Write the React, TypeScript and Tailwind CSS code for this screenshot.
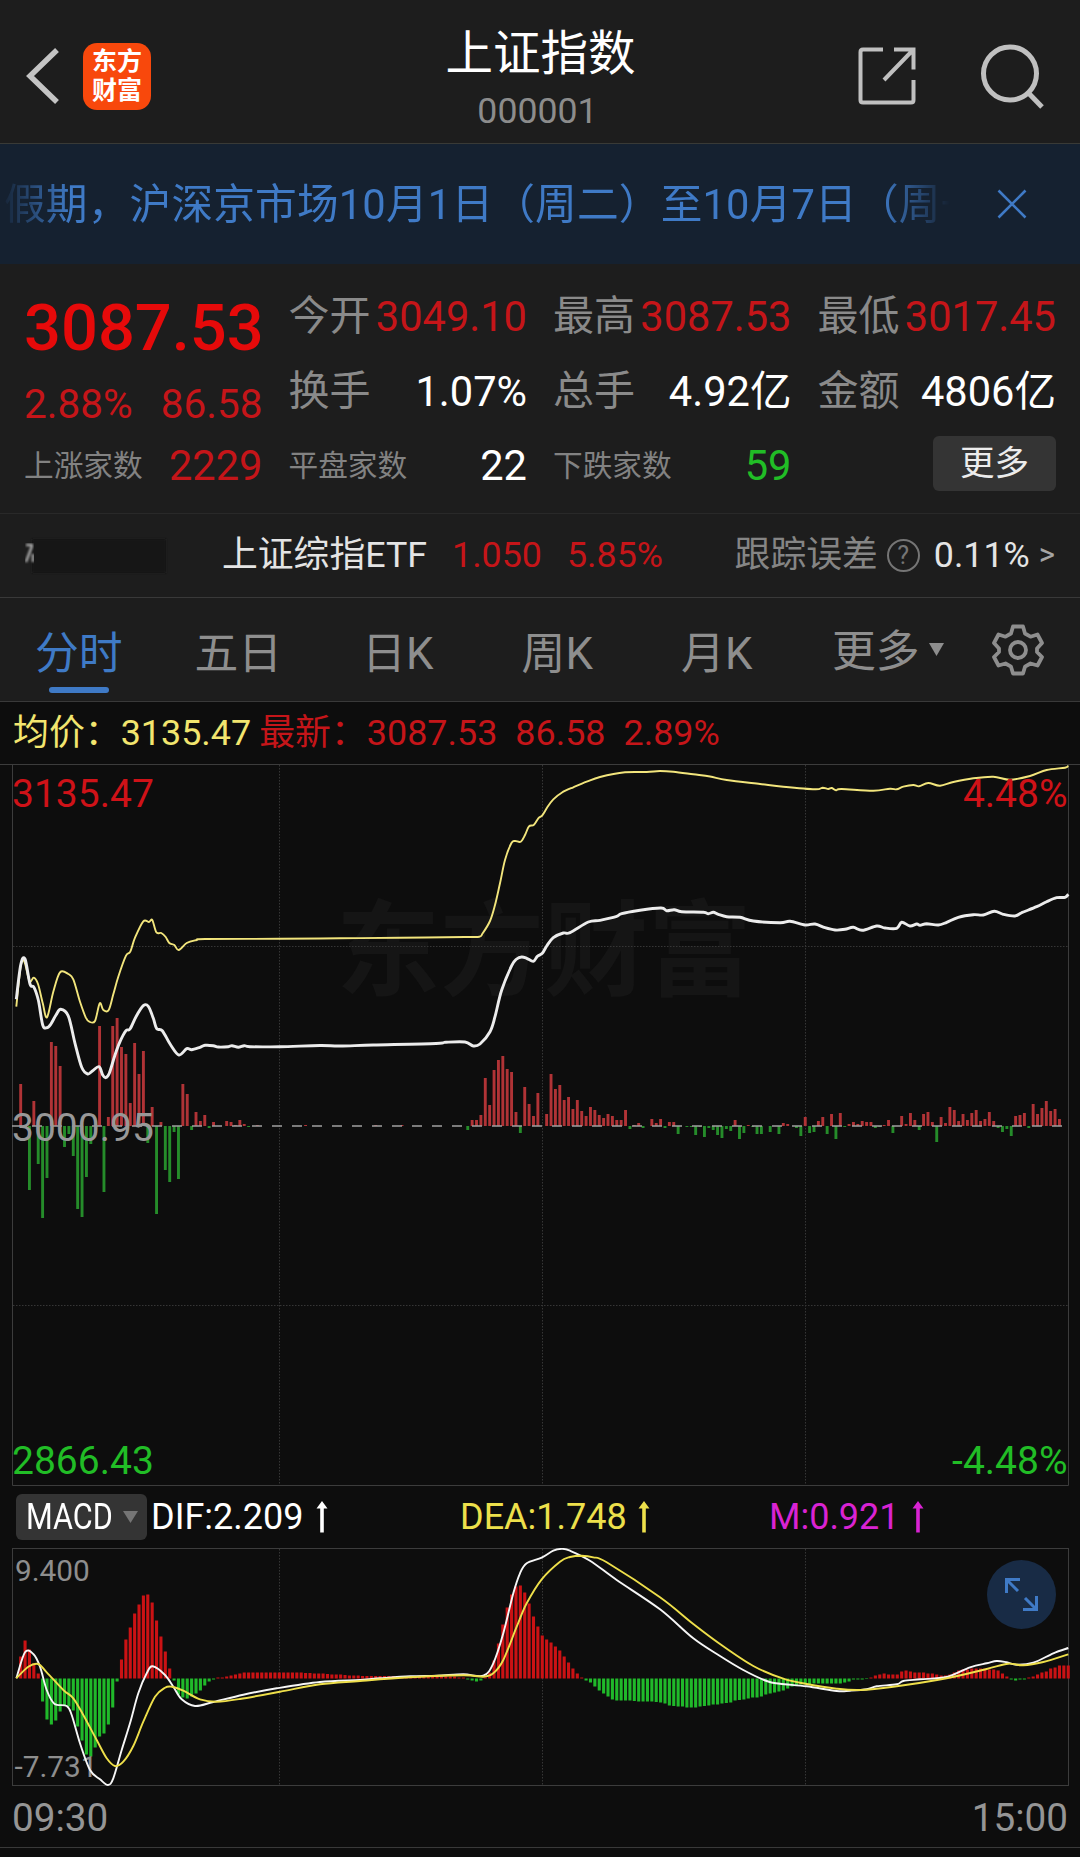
import React, { ReactNode } from 'react';

type Point = [number, number];

// One slot per trading minute group, shared by both charts
const FIRST_X = 16.3;
const STEP = 4.383;
const GRID_X = [279.5, 542.5, 805.5];

const AVG_LINE: Point[] = [
  [16.3, 1006.7], [20.7, 966.7], [24.3, 961.5], [29.5, 981], [33.7, 977.7], [38, 984], [42.7, 1003], [47, 1017.3],
  [53.3, 991.7], [60, 972.3], [68.3, 974], [73.3, 979.3], [80, 1001.7], [85.7, 1017.3], [89.3, 1021.7], [95, 1021],
  [99.7, 1003.3], [103.3, 1010], [108.7, 1010], [113.3, 994.3], [118.3, 976.7], [126, 955.7], [130.3, 951.7],
  [135, 937.7], [143.3, 921.3], [149, 922], [152.3, 920], [156.3, 932.3], [161.3, 933], [165.7, 937], [169.3, 943],
  [174.3, 945], [178.7, 950], [186.7, 943], [196.7, 940], [205, 939], [280, 938.8], [340, 938.3], [400, 937.8],
  [465, 937], [479.3, 936.7], [482.7, 933.3], [490, 921], [495, 905], [500, 883.3], [505, 860], [511.3, 843.3],
  [515, 841], [520.7, 841.7], [525, 835], [529, 826.3], [533.7, 825], [538.3, 818.3], [542.3, 815.3],
  [547.3, 807.3], [553.3, 799.3], [561.7, 792.7], [573.3, 787.3], [586.7, 781.7], [600, 777], [625, 772.3],
  [646.7, 772], [660, 771], [673.3, 771.7], [693.3, 774.3], [710, 776.5], [726.7, 780], [760, 784], [783.3, 786.7],
  [815, 789.3], [822.7, 787.7], [828.3, 789], [831.7, 788], [836, 790.3], [841.7, 789], [873.3, 790.7],
  [890, 788.7], [896.7, 789.3], [903.3, 786.7], [913.3, 785], [919, 786.3], [928.3, 783], [940, 785.7],
  [953.3, 782], [973.3, 778.3], [993.3, 776.7], [1010, 779.7], [1030, 776], [1046.7, 770], [1065, 767.7],
  [1068.3, 765.7],
];

const PRICE_LINE: Point[] = [
  [16.3, 999.3], [20.7, 965], [25, 959], [30, 984], [34, 987.3], [38.3, 1000], [42.7, 1025], [46.7, 1027.7],
  [50.7, 1024.3], [56, 1015], [60.7, 1009.3], [68.3, 1016], [75, 1043.3], [81.7, 1067.3], [87.7, 1074],
  [92.7, 1070.7], [99, 1066.7], [102.7, 1075], [105.7, 1077.7], [109.3, 1073.3], [115, 1055], [120, 1041.7],
  [126, 1030.7], [130, 1029], [136, 1016.7], [143.3, 1005.7], [148.3, 1006.3], [153.3, 1018.3], [156.7, 1028.7],
  [162.3, 1030.7], [170.7, 1045], [179, 1055], [186.7, 1048.7], [191.7, 1049.7], [200, 1047.3], [205, 1045.3],
  [213.3, 1045.7], [218.3, 1047], [228.3, 1046.7], [232, 1045.7], [238.3, 1047.3], [244.3, 1045.7],
  [250, 1046.7], [280, 1046.7], [320, 1045.5], [340, 1046], [373.3, 1045], [436, 1043.5], [446, 1042.2],
  [465, 1042], [473.3, 1046], [480, 1044], [490, 1031.7], [495, 1016.7], [501.7, 990], [511.7, 965.7],
  [516.7, 959], [521.7, 957], [526.7, 958.3], [533.3, 961.3], [537.3, 956.3], [542.3, 953.3], [546.7, 946],
  [553.3, 937.7], [563.3, 933], [570, 932.7], [588.3, 922], [600, 920.3], [616, 916.7], [621.7, 913.7],
  [640, 910.3], [661, 908], [666.7, 910.7], [674.3, 909.7], [681.7, 911.7], [703.3, 912.3], [708.3, 913.7],
  [713.3, 912.3], [718.3, 914.3], [726.7, 916.7], [740, 917.3], [753.3, 921], [780, 922.7], [790, 921.3],
  [805, 925], [815, 924], [825, 927.7], [835, 930], [845, 929.3], [853.3, 927.3], [862.3, 930.3], [876.7, 926],
  [885, 928], [896.7, 928.3], [901.7, 922.3], [910, 926], [916.7, 924], [920, 925.3], [926.7, 923.7],
  [938.3, 925], [946.7, 922.3], [958.3, 917.3], [973.3, 914.7], [983.3, 915], [994.3, 911.3], [1003.3, 914.3],
  [1015, 916], [1021.7, 912.7], [1036.7, 906.7], [1046.7, 901.7], [1056.7, 897.7], [1065, 897.3], [1068.3, 894.3],
];

const STRENGTH: number[] = [
  0, 42, 0, -64, 25, -38, -92, -52, 84, 80, 60, -21, -8, -30, -83, -91, -51, -18, 0, 100,
  -66, 9, 100, 108, 79, 72, 23, 83, 52, 75, -17, 19, -88, 4, -44, -56, -6, -53, 42, 32,
  -4, 14, 5, 11, -2, 4, 0, 0, 5, 4, 1, 6, 2, -1, 0, 1, 0, 0, 0, 0,
  0, 0, 0, 0, 0, 0, 1, 0, 0, 0, 0, 0, 0, 0, 0, 0, 0, 0, 0, 0,
  0, 0, 1, 0, 0, 0, 0, 0, 1, 0, 0, 0, 0, 0, 0, 0, 0, 0, 0, 0,
  0, 0, 0, -4, 6, 6, 11, 48, 21, 56, 66, 70, 57, 54, 14, -7, 39, 22, 10, 33,
  0, 12, 52, 37, 41, 26, 29, 17, 26, 15, 10, 19, 16, 11, 8, 12, 10, 6, 6, 16,
  -3, 1, 3, -2, 0, 7, 3, 7, -2, 4, 4, -8, 0, -1, -1, -9, -1, -11, -2, -4,
  -9, -12, -3, -5, 6, -13, -7, 1, -1, -8, -8, 0, -6, 0, -8, 3, 2, 0, -2, -10,
  9, -7, -6, 5, 9, -8, 12, -13, 13, -1, 2, 4, 2, 5, 4, 4, -2, -1, 1, 6,
  -7, 0, 10, 2, 13, 6, -4, 12, 14, 4, -16, 9, 3, 19, 16, 5, 12, 6, 13, 16,
  5, 7, 14, 5, -2, -6, -3, -10, 10, 11, 13, -2, 22, 12, 18, 25, 15, 17, 7,
];

const MACD_BARS: number[] = [
  0, 22, 38, 29, 15, 5, -23, -41, -46, -42, -33, -27, -28, -32, -48, -62, -76, -78, -69, -58,
  -55, -46, -29, -3, 19, 39, 51, 65, 74, 83, 84, 76, 58, 42, 27, 10, -2, -16, -19, -20,
  -18, -15, -12, -7, -3, -1, 1, 1, 2, 3, 4, 5, 6, 6, 6, 6, 6, 6, 6, 6,
  6, 6, 6, 6, 6, 6, 5.5, 5.5, 5, 5, 5, 4.5, 4, 4, 4, 3.5, 3, 3, 3, 2.5,
  2.5, 2.5, 2.5, 2.5, 2.5, 2.5, 2.5, 2, 2, 2, 2, 2, 2, 2, 2, 2, 2, 2, 2, 2,
  2, 1, 1, -1, -2, -3, -2, 1, 6, 18, 35, 54, 71, 84, 92, 93, 86, 75, 62, 52,
  43, 39, 36, 32, 28, 22, 16, 10, 5, 1, -2, -4, -8, -12, -15, -18, -21, -22, -22, -22,
  -22, -22.5, -23, -23, -23, -23, -23.5, -24, -25, -27, -27.5, -28, -28, -29, -29, -29, -28, -27.5, -27, -26,
  -26, -25, -24.5, -24, -22, -21.5, -21, -20, -19, -19, -18, -16, -15, -14, -13, -12, -10, -8, -7, -6,
  -6, -6, -5, -5, -5, -5, -5, -5, -5, -4, -3, -1, -1, -1, -0.5, 1, 3, 4, 5, 4,
  4, 4, 7, 8, 7, 6, 6, 6, 5, 5, 4, 3, 3, 4, 6, 8, 9, 9, 10, 10,
  10, 10, 9, 9, 8, 5, 2, -1, -2, -1, -1, 1, 2, 4, 6, 7, 10, 11, 13, 13, 13,
];

const DIF_LINE: Point[] = [
  [16.3, 1678.3], [25, 1652.3], [33.3, 1654], [40, 1666.7], [46.7, 1690], [54.3, 1703.7], [66.7, 1706],
  [71.7, 1715], [80, 1743.3], [90, 1770], [100, 1779.3], [108, 1785], [113.3, 1778.3], [121.7, 1750],
  [130, 1723.3], [138.3, 1693.3], [146.7, 1673.3], [152.7, 1666.3], [165, 1675], [173.3, 1686.7],
  [181.7, 1699.3], [195, 1706], [213.3, 1702], [243.3, 1694.7], [276.7, 1688.3], [320, 1682], [360, 1680],
  [380, 1678.3], [410, 1676.3], [436.7, 1675.7], [463.3, 1674.3], [483.3, 1675.7], [493.3, 1663.3],
  [503.3, 1633.3], [513.3, 1593.3], [520, 1573.3], [526.7, 1563.3], [541.7, 1557.7], [553.3, 1550.7],
  [561.7, 1548.9], [570, 1550.7], [590, 1560.7], [616.7, 1580], [660, 1609.3], [693.3, 1638.3], [720, 1656],
  [743.3, 1670], [766.7, 1681], [780, 1683.7], [806.7, 1686.3], [836.7, 1691], [850, 1690.7], [866.7, 1689.3],
  [876.7, 1686.3], [896.7, 1684.3], [903.3, 1681], [920, 1679.3], [946.7, 1677], [970, 1667.3], [986.7, 1663.3],
  [996.7, 1661], [1006.7, 1662.3], [1016.7, 1664.7], [1033.3, 1662.7], [1053.3, 1653.3], [1068.3, 1648],
];

const DEA_LINE: Point[] = [
  [16.3, 1678.3], [28.3, 1666.7], [38.3, 1664], [46.7, 1672.3], [63.3, 1690], [73.3, 1698.3], [83.3, 1715],
  [96.7, 1740], [106.7, 1758.3], [115, 1766], [123.3, 1761.7], [133.3, 1746], [143.3, 1721.7], [155, 1696.7],
  [165, 1687.7], [171.7, 1686.7], [183.3, 1690.7], [200, 1699.3], [216.7, 1701.7], [240, 1699], [280, 1691.7],
  [320, 1684.3], [360, 1681], [410, 1677.3], [463.3, 1675.3], [483.3, 1676.7], [493.3, 1673.3],
  [503.3, 1660], [516.7, 1626.7], [526.7, 1603.3], [541.7, 1579.3], [560, 1561.7], [570, 1557], [581.7, 1555.7],
  [593.3, 1557.3], [606.7, 1562.3], [660, 1597.3], [693.3, 1624], [720, 1644], [753.3, 1666], [783.3, 1678.7],
  [806.7, 1684], [836.7, 1688.7], [860, 1690], [893.3, 1686.7], [946.7, 1678.3], [986.7, 1669], [1008.3, 1663.7],
  [1023.3, 1665.3], [1043.3, 1662], [1068.3, 1654.3],
];

// Catmull-Rom spline through the points
function smoothPath(points: Point[], tension = 6): string {
  let d = `M${points[0][0]} ${points[0][1]}`;
  for (let i = 0; i < points.length - 1; i++) {
    const p0 = points[i - 1] || points[i];
    const p1 = points[i];
    const p2 = points[i + 1];
    const p3 = points[i + 2] || p2;
    const c1 = [p1[0] + (p2[0] - p0[0]) / tension, p1[1] + (p2[1] - p0[1]) / tension];
    const c2 = [p2[0] - (p3[0] - p1[0]) / tension, p2[1] - (p3[1] - p1[1]) / tension];
    d += `C${c1[0].toFixed(1)} ${c1[1].toFixed(1)} ${c2[0].toFixed(1)} ${c2[1].toFixed(1)} ${p2[0]} ${p2[1]}`;
  }
  return d;
}

interface BarsProps {
  values: number[];
  baseline: number;
  width: number;
  up: string;
  down: string;
}

function Bars({ values, baseline, width, up, down }: BarsProps) {
  return (
    <g>
      {values.map((v, i) =>
        v === 0 ? null : (
          <rect
            key={i}
            x={FIRST_X + STEP * i - width / 2}
            y={v > 0 ? baseline - v : baseline}
            width={width}
            height={Math.abs(v)}
            fill={v > 0 ? up : down}
          />
        )
      )}
    </g>
  );
}

function Header() {
  return (
    <header className="flex h-[144px] items-center border-b border-[#393a36] pl-[26px] pr-[34px] pt-[9px]">
      <svg className="h-[56px] w-[34px]" viewBox="0 0 34 56" fill="none" stroke="#c4c4c4" strokeWidth="5.5">
        <path d="M31 2 L4 28 L31 54" />
      </svg>
      <div className="ml-[23px] flex h-[67px] w-[68px] flex-col items-center justify-center rounded-[14px] bg-[#f8480c] text-[25px] font-bold leading-[29px] text-white">
        <span>东方</span>
        <span>财富</span>
      </div>
      <div className="mt-[4px] flex flex-1 flex-col items-center pl-[72px]">
        <h1 className="text-[47.5px] leading-[58px] text-white">上证指数</h1>
        <p className="mr-[6px] mt-[8px] text-[35.7px] leading-[40px] text-[#8c8c8c]">000001</p>
      </div>
      <svg className="h-[60px] w-[60px]" viewBox="0 0 60 60" fill="none" stroke="#c0c0c0" strokeWidth="4">
        <path d="M25 3.5 H5 Q2.500 3.500 2.500 6 V54 Q2.500 56.500 5 56.500 H53 Q55.500 56.500 55.500 54 V34" />
        <path d="M36 3.500 H55.500 V23.500 M55 4 L26 34" />
      </svg>
      <svg className="ml-[62px] h-[66px] w-[66px]" viewBox="0 0 66 66" fill="none" stroke="#c0c0c0" strokeWidth="5">
        <circle cx="30" cy="30.500" r="26.500" />
        <path d="M47.500 49 L62 64" />
      </svg>
    </header>
  );
}

function NoticeBar() {
  return (
    <div className="flex h-[120px] items-center bg-[#152130] text-[#3f7ac6]">
      <div className="w-[954px] overflow-hidden whitespace-nowrap pl-[4px] pt-[2px] text-[41.7px] leading-[60px] tracking-[0.16px] [mask-image:linear-gradient(to_right,transparent_0,#000_70px,#000_880px,transparent_950px)]">
        假期，沪深京市场10月1日（周二）至10月7日（周一
      </div>
      <svg className="ml-[43px] h-[30px] w-[30px]" viewBox="0 0 30 30" fill="none" stroke="currentColor" strokeWidth="2.6">
        <path d="M1.500 1.500 L28.500 28.500 M28.500 1.500 L1.500 28.500" />
      </svg>
    </div>
  );
}

interface StatProps {
  label: string;
  value: ReactNode;
  small?: boolean;
  color: string;
}

function Stat({ label, value, small, color }: StatProps) {
  return (
    <div className="flex h-[60px] items-center justify-between whitespace-nowrap">
      <span className={small ? 'text-[29.7px] text-[#828282]' : 'text-[41px] text-[#8a8a8a]'}>{label}</span>
      <span className={`text-[41.6px] ${color}`}>{value}</span>
    </div>
  );
}

function Quote() {
  return (
    <section className="h-[250px] border-b border-[#292929] pl-[24px] pr-[24px]">
      <div className="grid grid-cols-4 gap-x-[26px]">
        <div className="flex flex-col pt-[21px]">
          <div className="h-[86px] whitespace-nowrap text-[65px] font-medium leading-[86px] text-[#e60a0a]">3087.53</div>
          <div className="flex h-[66px] items-center justify-between text-[40.5px] text-[#c51519]">
            <span>2.88%</span>
            <span>86.58</span>
          </div>
          <div className="mt-[-1px]">
            <Stat label="上涨家数" value="2229" small color="text-[#c51519]" />
          </div>
        </div>
        <div className="pt-[23px]">
          <Stat label="今开" value="3049.10" color="text-[#c51519]" />
          <div className="h-[15px]" />
          <Stat label="换手" value="1.07%" color="text-white" />
          <div className="h-[14px]" />
          <Stat label="平盘家数" value="22" small color="text-white" />
        </div>
        <div className="pt-[23px]">
          <Stat label="最高" value="3087.53" color="text-[#c51519]" />
          <div className="h-[15px]" />
          <Stat label="总手" value="4.92亿" color="text-white" />
          <div className="h-[14px]" />
          <Stat label="下跌家数" value="59" small color="text-[#21bd26]" />
        </div>
        <div className="pt-[23px]">
          <Stat label="最低" value="3017.45" color="text-[#c51519]" />
          <div className="h-[15px]" />
          <Stat label="金额" value="4806亿" color="text-white" />
          <button className="ml-auto mt-[14px] flex h-[55px] w-[123px] items-center justify-center rounded-md bg-[#343434] text-[34.5px] text-[#ececec]">
            更多
          </button>
        </div>
      </div>
    </section>
  );
}

function EtfRow() {
  return (
    <section className="flex h-[84px] items-center border-b border-[#393939] pl-[24px] pr-[25px] text-[35.8px]">
      <svg className="h-[42px] w-[146px]" viewBox="0 0 146 42">
        <defs>
          <filter id="smudge">
            <feGaussianBlur stdDeviation="1" />
          </filter>
        </defs>
        <rect x="8" y="4" width="134" height="34" fill="#191919" filter="url(#smudge)" />
        <path d="M2 10 H9 M8 11 L2 27 M9 19 V27" stroke="#a8a8a8" strokeWidth="2.500" fill="none" filter="url(#smudge)" />
      </svg>
      <span className="ml-[52px] whitespace-nowrap text-[#e4e4e4]">上证综指ETF</span>
      <span className="ml-[25px] text-[#c51519]">1.050</span>
      <span className="ml-[25px] text-[#c51519]">5.85%</span>
      <div className="ml-auto flex items-center whitespace-nowrap">
        <span className="text-[#858585]">跟踪误差</span>
        <span className="ml-[9px] flex h-[33px] w-[33px] items-center justify-center rounded-full border-[2.5px] border-[#757575] text-[25px] leading-none text-[#757575]">
          ?
        </span>
        <span className="ml-[14px] text-[#e4e4e4]">0.11%</span>
        <span className="ml-[9px] text-[31px] text-[#a5a5a5]">&gt;</span>
      </div>
    </section>
  );
}

const TABS = ['分时', '五日', '日K', '周K', '月K'];

function Tabs() {
  return (
    <nav className="flex h-[104px] items-center border-b border-[#393939] text-[43.8px] text-[#8e8e8e]">
      {TABS.map((tab, i) => (
        <div key={tab} className="ml-[-1px] mr-[1px] flex h-full w-[159.5px] flex-col items-center pt-[24px]">
          <span className={i === 0 ? 'leading-[64px] text-[#3f7ac6]' : 'leading-[64px]'}>{tab}</span>
          {i === 0 && <span className="mt-[1px] h-[6px] w-[60px] rounded-full bg-[#3f7ac6]" />}
        </div>
      ))}
      <div className="ml-[34.5px] flex items-center pt-[4px]">
        <span className="leading-[64px]">更多</span>
        <svg className="mb-[4px] ml-[9px] h-[13px] w-[15px]" viewBox="0 0 15 13" fill="#8e8e8e">
          <path d="M0 0 H15 L7.500 13 Z" />
        </svg>
      </div>
      <svg className="ml-[48px] h-[52px] w-[52px]" viewBox="0 0 52 52" fill="none" stroke="#8e8e8e" strokeWidth="3.800" strokeLinejoin="round">
        <path d="M21 2.500 H31 L33 9.500 L38.500 12.700 L45.500 10.500 L50 19 L45 24.500 V28 L50 33 L45.500 41.500 L38.500 39.500 L33 42.700 L31 49.500 H21 L19 42.700 L13.500 39.500 L6.500 41.500 L2 33 L7 28 V24.500 L2 19 L6.500 10.500 L13.500 12.700 L19 9.500 Z" />
        <circle cx="26" cy="26" r="8" />
      </svg>
    </nav>
  );
}

function PriceChart() {
  return (
    <svg className="block h-[722px] w-[1080px]" viewBox="0 764 1080 722" fill="none">
      <text x="336" y="988" fontSize="104" fontWeight="700" fill="#151515">东方财富</text>
      <g stroke="#363636" strokeDasharray="1.500 1.500">
        {GRID_X.map((x) => (
          <path key={x} d={`M${x} 765 V1485`} />
        ))}
        <path d="M13 946.500 H1068 M13 1305.500 H1068" />
      </g>
      <path d="M0 764.500 H1080 M12.500 764.500 V1485.500 H1068.500 V764.500" stroke="#3c3c3c" />
      <Bars values={STRENGTH} baseline={1126} width={2.9} up="#b03336" down="#258c2a" />
      <path d="M12 1126 H1062" stroke="#a0a0a0" strokeWidth="1.500" strokeDasharray="10 10" />
      <path d={smoothPath(AVG_LINE)} stroke="#f2e57c" strokeWidth="1.900" />
      <path d={smoothPath(PRICE_LINE)} stroke="#ececec" strokeWidth="2.900" />
      <g fontSize="39">
        <text x="12" y="807" fill="#cf1218">3135.47</text>
        <text x="1067.500" y="807" fill="#cf1218" textAnchor="end">4.48%</text>
        <text x="12" y="1140.500" fill="#989898">3000.95</text>
        <text x="12" y="1474" fill="#21bd26">2866.43</text>
        <text x="1067.500" y="1474" fill="#21bd26" textAnchor="end">-4.48%</text>
      </g>
    </svg>
  );
}

function UpArrow({ className }: { className: string }) {
  return (
    <svg className={`h-[32px] w-[12px] ${className}`} viewBox="0 0 12 32" fill="currentColor">
      <path d="M6 0 L11.500 7.500 H7.800 V31.500 H4.200 V7.500 H0.500 Z" />
    </svg>
  );
}

function MacdLegend() {
  return (
    <div className="flex h-[62px] items-center pl-[16px] text-[36px]">
      <div className="flex h-[46px] w-[131px] items-center rounded-md bg-[#343434] pl-[10px] text-white">
        <span className="w-[88px] origin-left scale-x-[0.85]">MACD</span>
        <svg className="ml-[9px] h-[12px] w-[15px]" viewBox="0 0 15 12" fill="#757575">
          <path d="M0 0 H15 L7.500 12 Z" />
        </svg>
      </div>
      <div className="ml-[4px] flex w-[309px] items-center text-white">
        DIF:2.209
        <UpArrow className="ml-[13px]" />
      </div>
      <div className="flex w-[309px] items-center text-[#ede04b]">
        DEA:1.748
        <UpArrow className="ml-[11px]" />
      </div>
      <div className="flex items-center text-[#d923d3]">
        M:0.921
        <UpArrow className="ml-[12px]" />
      </div>
    </div>
  );
}

function MacdChart() {
  return (
    <svg className="block h-[238px] w-[1080px]" viewBox="0 1548 1080 238" fill="none">
      <g stroke="#363636" strokeDasharray="1.500 1.500">
        {GRID_X.map((x) => (
          <path key={x} d={`M${x} 1549 V1785`} />
        ))}
      </g>
      <rect x="12.500" y="1548.500" width="1056" height="237" stroke="#3c3c3c" />
      <Bars values={MACD_BARS} baseline={1678.5} width={3.1} up="#cb1214" down="#20b92a" />
      <g fontSize="29.800" fill="#8e8e8e">
        <text x="15" y="1580.500">9.400</text>
        <text x="14.500" y="1776.500">-7.731</text>
      </g>
      <path d={smoothPath(DIF_LINE)} stroke="#f6f6f6" strokeWidth="1.900" />
      <path d={smoothPath(DEA_LINE)} stroke="#eedf4a" strokeWidth="1.900" />
      <circle cx="1021.500" cy="1594.500" r="34.500" fill="#182b45" />
      <path
        d="M1006.500 1593 V1579.500 H1020 M1007 1580 L1018 1591 M1036.500 1596 V1609.500 H1023 M1036 1609 L1025 1598"
        stroke="#3f7ac6"
        strokeWidth="3"
      />
    </svg>
  );
}

export default function App() {
  return (
    <main className="h-[1857px] w-[1080px] overflow-hidden bg-[#1d1d1d] font-[Roboto,'Noto_Sans_CJK_SC',sans-serif]">
      <Header />
      <NoticeBar />
      <Quote />
      <EtfRow />
      <Tabs />
      <div className="bg-[#0d0d0d]">
        <div className="flex h-[62px] items-center whitespace-nowrap pl-[13px] pt-[2px] text-[35.900px] text-[#c51519]">
          <span className="text-[#f2e56f]">均价：3135.47</span>
          <span className="ml-[8px]">最新：3087.53</span>
          <span className="ml-[18px]">86.58</span>
          <span className="ml-[18px]">2.89%</span>
        </div>
        <PriceChart />
        <MacdLegend />
        <MacdChart />
        <div className="flex h-[62px] items-center justify-between border-b border-[#393939] px-[12px] pt-[3px] text-[38.700px] text-[#959595]">
          <span>09:30</span>
          <span>15:00</span>
        </div>
        <div className="h-[9px]" />
      </div>
    </main>
  );
}
